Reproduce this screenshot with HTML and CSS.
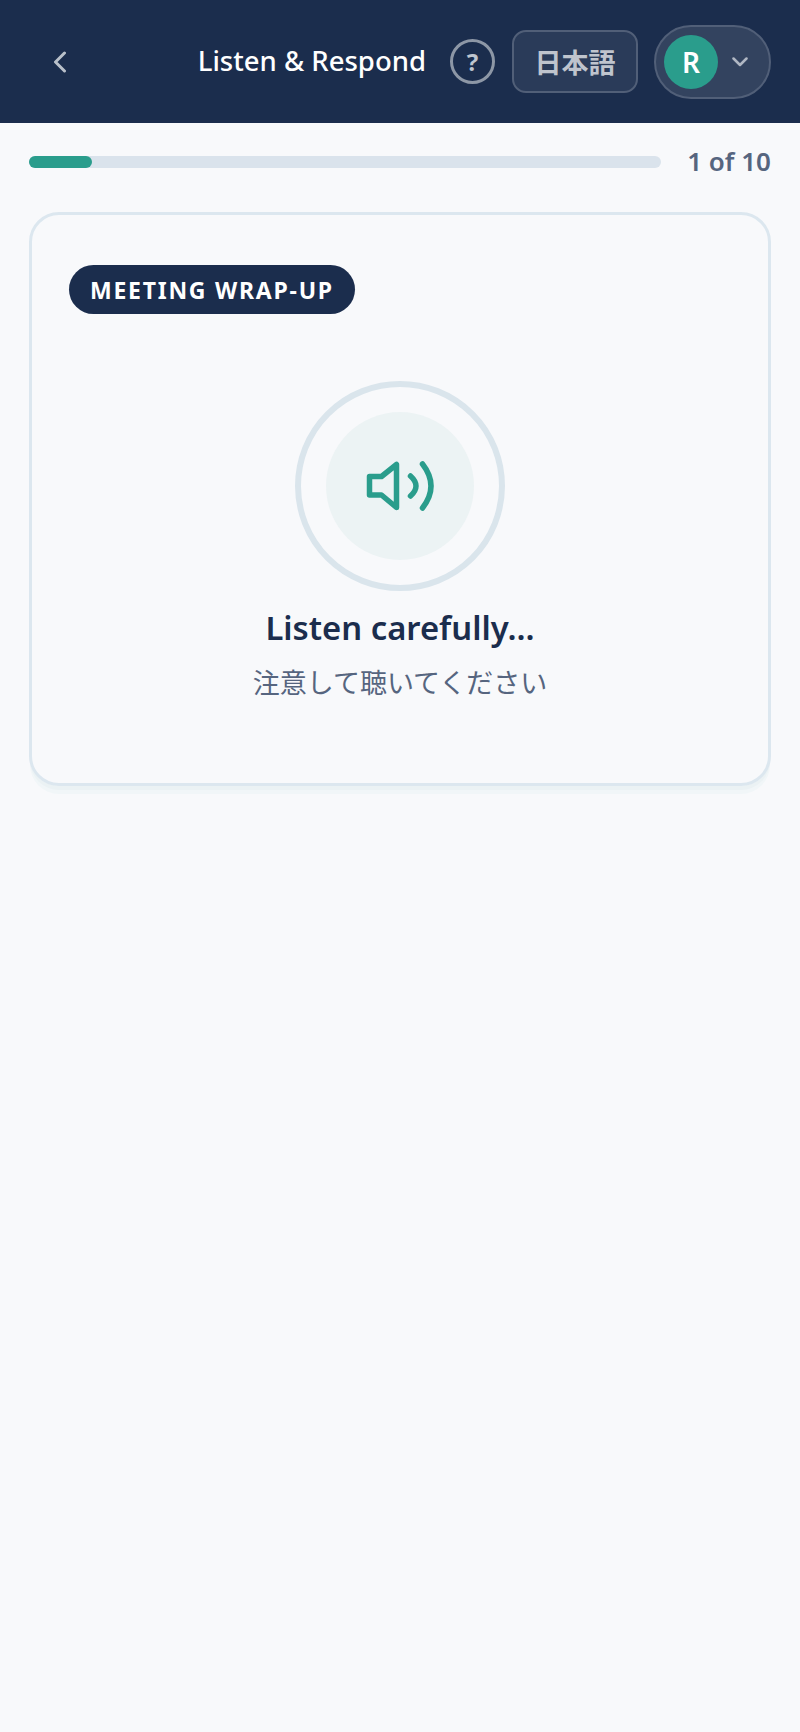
FILE: index.html
```html
<!DOCTYPE html>
<html lang="en">
<head>
    <meta charset="UTF-8">
    <meta name="viewport" content="width=device-width, initial-scale=1.0">
    <title>Listen &amp; Respond</title>
    <link rel="stylesheet" href="styles.css">
</head>
<body>
    <header class="topbar">
        <button class="back-btn" aria-label="Back">
            <svg width="14" height="22" viewBox="0 0 14 22"><path d="M11.5 2 L2.5 11 L11.5 20" fill="none" stroke="currentColor" stroke-width="3" stroke-linecap="round" stroke-linejoin="round"/></svg>
        </button>
        <h1 class="page-title">Listen &amp; Respond</h1>
        <button class="help-btn">?</button>
        <button class="lang-btn">日本語</button>
        <button class="profile-btn">
            <span class="avatar">R</span>
            <svg class="caret" width="16" height="10" viewBox="0 0 16 10"><path d="M1.5 1.5 L8 8 L14.5 1.5" fill="none" stroke="currentColor" stroke-width="2.5" stroke-linecap="round" stroke-linejoin="round"/></svg>
        </button>
    </header>

    <main class="content">
        <div class="progress-row">
            <div class="progress-track"><div class="progress-fill"></div></div>
            <span class="progress-count">1 of 10</span>
        </div>

        <section class="card">
            <span class="tag">MEETING WRAP-UP</span>
            <div class="listen">
                <div class="ring">
                    <div class="ring-inner">
                        <svg width="70" height="54" viewBox="0 0 70 54"><g fill="none" stroke="#2a9d8c" stroke-width="5.5" stroke-linecap="round" stroke-linejoin="round"><path d="M4.5 17.5 H16.5 L31.5 5.5 V48.5 L16.5 36 H4.5 Z"/><path d="M45.5 17 Q56.5 27 45.5 37"/><path d="M57.5 5 Q74.5 27 57.5 49"/></g></svg>
                    </div>
                </div>
                <p class="listen-title">Listen carefully...</p>
                <p class="listen-sub">注意して聴いてください</p>
            </div>
        </section>
    </main>
</body>
</html>
```

FILE: styles.css
```css
* {
    box-sizing: border-box;
}
body {
    margin: 0;
    min-height: 1732px;
    background-color: #f8f9fb;
    font-family: "Noto Sans", "Noto Sans CJK JP", sans-serif;
}
button {
    font-family: inherit;
    padding: 0;
}
.topbar {
    height: 123px;
    background-color: #1b2d4d;
    display: flex;
    align-items: center;
    padding: 0 29px 0 49px;
}
.back-btn {
    width: 22px;
    height: 30px;
    background: none;
    border: none;
    color: #b9c0ca;
    display: flex;
    align-items: center;
    justify-content: center;
}
.page-title {
    flex: 1;
    margin: 0 0 2px;
    padding-right: 24px;
    text-align: right;
    color: #fff;
    font-size: 27.5px;
    font-weight: 500;
}
.help-btn {
    width: 45px;
    height: 45px;
    border-radius: 50%;
    border: 3px solid #8d97a6;
    background: none;
    color: #bfc5cf;
    font-size: 24px;
    font-weight: 700;
    margin-right: 17px;
}
.lang-btn {
    width: 126px;
    height: 63px;
    border-radius: 14px;
    border: 2px solid #515f78;
    background-color: #2a3b59;
    color: #bfc4cd;
    font-size: 27px;
    font-weight: 600;
    margin-right: 16px;
}
.profile-btn {
    width: 117px;
    height: 74px;
    border-radius: 37px;
    border: 2px solid #515f78;
    background-color: #33435f;
    color: #b0b7c3;
    display: flex;
    align-items: center;
    padding-left: 8px;
}
.avatar {
    width: 54px;
    height: 54px;
    border-radius: 50%;
    background-color: #2a9d8c;
    color: #fff;
    font-size: 28px;
    font-weight: 600;
    display: flex;
    align-items: center;
    justify-content: center;
    margin-right: 14px;
}
.content {
    padding: 0 29px;
}
.progress-row {
    display: flex;
    align-items: center;
    gap: 26px;
    height: 78px;
}
.progress-track {
    flex: 1;
    height: 12px;
    border-radius: 6px;
    background-color: #dae3ec;
}
.progress-fill {
    width: 10%;
    height: 100%;
    border-radius: 6px;
    background-color: #2a9d8c;
}
.progress-count {
    margin-bottom: 2px;
    color: #56657f;
    font-size: 26px;
    font-weight: 600;
}
.card {
    margin-top: 11px;
    height: 574px;
    border: 3px solid #dce7ef;
    border-radius: 30px;
    padding: 50px 37px 0;
    box-shadow: 0 5px 0 -1px #ebf2f4, 0 9px 0 -1px #f1f6f8;
}
.tag {
    display: inline-block;
    height: 49px;
    line-height: 50px;
    padding: 0 21px;
    border-radius: 25px;
    background-color: #1b2d4d;
    color: #fff;
    font-size: 23px;
    font-weight: 700;
    letter-spacing: 1.75px;
}
.listen {
    display: flex;
    flex-direction: column;
    align-items: center;
    margin-top: 67px;
}
.ring {
    width: 210px;
    height: 210px;
    border-radius: 50%;
    border: 6px solid #dae5ec;
    display: flex;
    align-items: center;
    justify-content: center;
}
.ring-inner {
    width: 148px;
    height: 148px;
    border-radius: 50%;
    background-color: #ecf3f4;
    display: flex;
    align-items: center;
    justify-content: center;
}
.listen-title {
    margin: 14px 0 0;
    color: #1b2d4d;
    font-size: 32.8px;
    font-weight: 600;
}
.listen-sub {
    margin: 12px 0 0;
    color: #56657f;
    font-size: 27px;
    font-family: "Noto Sans CJK JP", "Noto Sans", sans-serif;
}
```
